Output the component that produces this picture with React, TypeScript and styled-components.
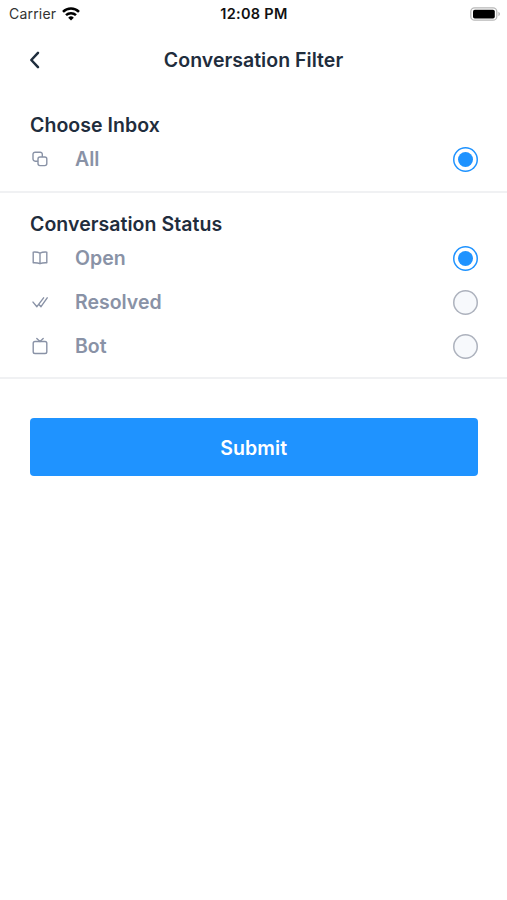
import React, { useState } from "react";
import styled, { createGlobalStyle } from "styled-components";

const GlobalStyle = createGlobalStyle`
  * { box-sizing: border-box; }
  body { margin: 0; background: #fff; }
`;

const Screen = styled.main`
  width: 100%;
  min-height: 900px;
  display: flex;
  flex-direction: column;
  background: #fff;
  font-family: Inter, sans-serif;
  color: #1f2d3d;
`;

const StatusBar = styled.div`
  display: grid;
  grid-template-columns: 1fr auto 1fr;
  align-items: center;
  height: 27px;
  padding: 0 7px 0 9px;
  color: #111;
`;

const Carrier = styled.div`
  display: flex;
  align-items: center;
  gap: 6px;
  font-size: 14px;
  letter-spacing: 0.2px;
  color: #333;
`;

const Clock = styled.div`
  font-size: 14.5px;
  font-weight: 600;
  letter-spacing: 0.3px;
  margin-right: 1px;
`;

const Battery = styled.div`
  display: flex;
  justify-content: flex-end;
  margin-right: -1px;
`;

const Header = styled.header`
  display: grid;
  grid-template-columns: 60px 1fr 60px;
  align-items: center;
  height: 65px;
`;

const BackButton = styled.button`
  display: flex;
  padding: 0 0 0 29px;
  border: 0;
  background: none;
`;

const Title = styled.h1`
  margin: 0;
  padding-top: 1px;
  text-align: center;
  font-size: 19.5px;
  line-height: 25px;
  font-weight: 600;
  letter-spacing: 0.03px;
`;

const Section = styled.section<{ $top: number; $bottom: number }>`
  padding: ${(p) => p.$top}px 29px ${(p) => p.$bottom}px 30px;
  border-bottom: 2px solid #f0f1f3;
`;

const SectionTitle = styled.h2`
  margin: 0 0 -1px;
  font-size: 19.5px;
  line-height: 25px;
  font-weight: 600;
  letter-spacing: 0.05px;
`;

const Row = styled.div`
  display: grid;
  grid-template-columns: 20px 1fr 25px;
  column-gap: 25px;
  align-items: center;
  height: 44px;
  color: #8992a6;
  cursor: pointer;
`;

const Label = styled.span`
  font-size: 19.5px;
  line-height: 25px;
  font-weight: 600;
`;

const Radio = styled.span<{ $on: boolean }>`
  display: flex;
  align-items: center;
  justify-content: center;
  width: 25px;
  height: 25px;
  border-radius: 50%;
  box-shadow: inset 0 0 0 1.5px ${(p) => (p.$on ? "#1f93ff" : "#adb2bd")};
  background: ${(p) => (p.$on ? "#fff" : "#f7f9fc")};
`;

const Dot = styled.span`
  width: 15px;
  height: 15px;
  border-radius: 50%;
  background: #1f93ff;
`;

const Submit = styled.button`
  margin: 39px 29.5px 0 30px;
  height: 58px;
  padding: 2px 0 0;
  border: 0;
  border-radius: 4px;
  background: #1f93ff;
  color: #fff;
  font: 600 19.5px/25px Inter, sans-serif;
  letter-spacing: 0.1px;
`;

const icons = {
  copy: (
    <>
      <path d="M7.5 12.2H5.1A2.1 2.1 0 0 1 3 10.1V5.3a2.1 2.1 0 0 1 2.1-2.1h5.1a2.1 2.1 0 0 1 2.1 2.1v2.2" />
      <rect x="8" y="8" width="8.8" height="8.6" rx="2" />
    </>
  ),
  book: (
    <path d="M10 5.1v10.6M3.2 4.1c2.5-.2 4.8 0 6.8 1 2-1 4.3-1.2 6.8-1v10.7c-2.5-.1-4.8 0-6.8.9-2-.9-4.3-1-6.8-.9z" />
  ),
  checks: <path d="M3 10.1l3.9 4.6L13.6 5.8M9.2 12.8l1.8 1.9L17.2 5.8" />,
  bot: (
    <>
      <rect x="3.2" y="5.5" width="13.6" height="12" rx="1.8" />
      <path d="M6.8 2.4L10 5.4l3.2-3" />
    </>
  ),
};

type Option = { label: string; icon: keyof typeof icons };

const inboxes: Option[] = [{ label: "All", icon: "copy" }];
const statuses: Option[] = [
  { label: "Open", icon: "book" },
  { label: "Resolved", icon: "checks" },
  { label: "Bot", icon: "bot" },
];

function Options({ items }: { items: Option[] }) {
  const [selected, setSelected] = useState(items[0].label);
  return (
    <div role="radiogroup">
      {items.map(({ label, icon }) => (
        <Row
          key={label}
          role="radio"
          aria-checked={selected === label}
          onClick={() => setSelected(label)}
        >
          <svg
            width="20"
            height="20"
            viewBox="0 0 20 20"
            fill="none"
            stroke="currentColor"
            strokeWidth="1.4"
            strokeLinecap="round"
            strokeLinejoin="round"
          >
            {icons[icon]}
          </svg>
          <Label>{label}</Label>
          <Radio $on={selected === label}>{selected === label && <Dot />}</Radio>
        </Row>
      ))}
    </div>
  );
}

export default function App() {
  return (
    <Screen>
      <GlobalStyle />
      <StatusBar>
        <Carrier>
          Carrier
          <svg width="18" height="14" viewBox="0 0 18 14" fill="none" stroke="#000" strokeWidth="2.5">
            <path d="M1 4.9a11.4 11.4 0 0 1 16 0M4 8.2a7.2 7.2 0 0 1 10 0" />
            <path d="M9 13.5L6.2 10.7a4 4 0 0 1 5.6 0z" fill="#000" stroke="none" />
          </svg>
        </Carrier>
        <Clock>12:08 PM</Clock>
        <Battery>
          <svg width="31" height="14" viewBox="0 0 31 14">
            <rect x="0.8" y="0.8" width="26" height="12.4" rx="3.8" fill="#fff" stroke="#b8b8b8" strokeWidth="1.3" />
            <rect x="3" y="2.7" width="21.8" height="8.8" rx="1.8" fill="#000" />
            <path d="M28.4 4.8c2.1.8 2.1 3.6 0 4.4z" fill="#b8b8b8" />
          </svg>
        </Battery>
      </StatusBar>
      <Header>
        <BackButton aria-label="Back">
          <svg width="12" height="20" viewBox="0 0 12 20" fill="none" stroke="#1f2d3d" strokeWidth="2.5" strokeLinecap="round" strokeLinejoin="round">
            <path d="M9 2.8L2.3 10 9 17.2" />
          </svg>
        </BackButton>
        <Title>Conversation Filter</Title>
      </Header>
      <Section $top={21} $bottom={10}>
        <SectionTitle>Choose Inbox</SectionTitle>
        <Options items={inboxes} />
      </Section>
      <Section $top={19} $bottom={9}>
        <SectionTitle>Conversation Status</SectionTitle>
        <Options items={statuses} />
      </Section>
      <Submit>Submit</Submit>
    </Screen>
  );
}
